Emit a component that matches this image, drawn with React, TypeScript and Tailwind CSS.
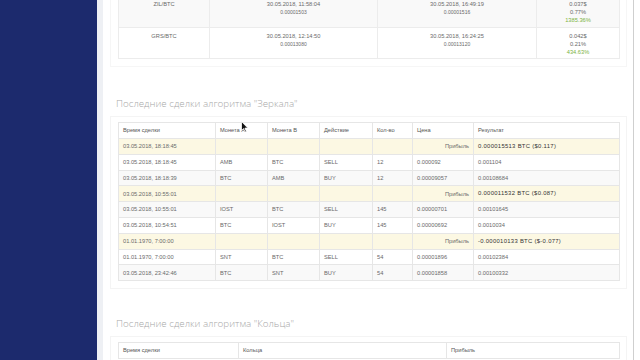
import React from "react";

type Row =
  | { kind: "profit"; time: string; value: string }
  | { kind: "trade"; time: string; a: string; b: string; act: string; qty: string; price: string; res: string };

const rows: Row[] = [
  { kind: "profit", time: "03.05.2018, 18:18:45", value: "0.000015513 BTC ($0.117)" },
  { kind: "trade", time: "03.05.2018, 18:18:45", a: "AMB", b: "BTC", act: "SELL", qty: "12", price: "0.000092", res: "0.001104" },
  { kind: "trade", time: "03.05.2018, 18:18:39", a: "BTC", b: "AMB", act: "BUY", qty: "12", price: "0.00009057", res: "0.00108684" },
  { kind: "profit", time: "03.05.2018, 10:55:01", value: "0.000011532 BTC ($0.087)" },
  { kind: "trade", time: "03.05.2018, 10:55:01", a: "IOST", b: "BTC", act: "SELL", qty: "145", price: "0.00000701", res: "0.00101645" },
  { kind: "trade", time: "03.05.2018, 10:54:51", a: "BTC", b: "IOST", act: "BUY", qty: "145", price: "0.00000692", res: "0.0010034" },
  { kind: "profit", time: "01.01.1970, 7:00:00", value: "-0.000010133 BTC ($-0.077)" },
  { kind: "trade", time: "01.01.1970, 7:00:00", a: "SNT", b: "BTC", act: "SELL", qty: "54", price: "0.00001896", res: "0.00102384" },
  { kind: "trade", time: "03.05.2018, 23:42:46", a: "BTC", b: "SNT", act: "BUY", qty: "54", price: "0.00001858", res: "0.00100332" },
];

const top = [
  { pair: "ZIL/BTC", d1: "30.05.2018, 11:58:04", p1: "0.00001503", d2: "30.05.2018, 16:49:19", p2: "0.00001516", usd: "0.037$", pct: "0.77%", g: "1385.36%" },
  { pair: "GRS/BTC", d1: "30.05.2018, 12:14:50", p1: "0.00013080", d2: "30.05.2018, 16:24:25", p2: "0.00013120", usd: "0.042$", pct: "0.21%", g: "434.63%" },
];

const td = "border border-[#e6e6e6] px-[4px] py-0 text-left font-normal";

export default function App() {
  return (
    <div className="relative flex h-[360px] w-[640px] overflow-hidden bg-white font-['Liberation_Sans',Arial,sans-serif] text-[5.7px] text-[#6a6a6a]">
      <div className="w-[97px] shrink-0 bg-[#1c2a6d]" />
      <div className="w-[6px] shrink-0 bg-[#eef0f4]" />
      <main className="flex w-[530px] shrink-0 flex-col pl-[7px] pr-[6px]">
        {/* Panel 1 (top, cut off) */}
        <div className="-mt-[5px] border-x border-b border-[#f6f6f6] px-[7px] pb-[7px]">
          <table className="w-[501px] table-fixed border-collapse">
            <colgroup>
              <col className="w-[91px]" />
              <col className="w-[168px]" />
              <col className="w-[159px]" />
              <col className="w-[83px]" />
            </colgroup>
            <tbody>
              {top.map((r, i) => (
                <tr key={r.pair} className={i === 0 ? "h-[32px] bg-[#f9f9f9]" : "h-[31px] bg-white"}>
                  <td className="border border-[#ececec] pt-[4px] text-center align-top leading-[8px]">{r.pair}</td>
                  <td className="border border-[#ececec] pt-[4px] text-center align-top leading-[8px]">
                    <div>{r.d1}</div>
                    <div className="text-[5px]">{r.p1}</div>
                  </td>
                  <td className="border border-[#ececec] pt-[4px] text-center align-top leading-[8px]">
                    <div>{r.d2}</div>
                    <div className="text-[5px]">{r.p2}</div>
                  </td>
                  <td className="border border-[#ececec] pt-[4px] text-center align-top leading-[8px]">
                    <div>{r.usd}</div>
                    <div>{r.pct}</div>
                    <div className="text-[#7cb342]">{r.g}</div>
                  </td>
                </tr>
              ))}
            </tbody>
          </table>
        </div>

        <h2 className="mt-[30px] pl-[6px] font-['Open_Sans',sans-serif] text-[9.8px] font-light leading-[14px] text-[#a8a8a8]">
          Последние сделки алгоритма "Зеркала"
        </h2>

        {/* Panel 2 */}
        <div className="mt-[5px] border border-[#f4f4f4] px-[7px] pb-[7px] pt-[5px]">
          <table className="w-[501px] table-fixed border-collapse">
            <colgroup>
              <col className="w-[97px]" />
              <col className="w-[52px]" />
              <col className="w-[52px]" />
              <col className="w-[53px]" />
              <col className="w-[40px]" />
              <col className="w-[61px]" />
              <col className="w-[146px]" />
            </colgroup>
            <thead>
              <tr className="h-[16px] text-[#555]">
                <th className={td}>Время сделки</th>
                <th className={td}>Монета А</th>
                <th className={td}>Монета В</th>
                <th className={td}>Действие</th>
                <th className={td}>Кол-во</th>
                <th className={td}>Цена</th>
                <th className={td}>Результат</th>
              </tr>
            </thead>
            <tbody>
              {rows.map((r, i) =>
                r.kind === "profit" ? (
                  <tr key={i} className="h-[15.8px] bg-[#fcf8e3]">
                    <td className={td}>{r.time}</td>
                    <td className={td}></td>
                    <td className={td}></td>
                    <td className={td}></td>
                    <td className={td}></td>
                    <td className={`${td} text-right`}>Прибыль</td>
                    <td className={`${td} text-[5.9px] font-bold tracking-[0.3px] text-[#333]`}>{r.value}</td>
                  </tr>
                ) : (
                  <tr key={i} className={`h-[15.8px] ${i % 2 === 0 ? "bg-[#f9f9f9]" : "bg-white"}`}>
                    <td className={td}>{r.time}</td>
                    <td className={td}>{r.a}</td>
                    <td className={td}>{r.b}</td>
                    <td className={td}>{r.act}</td>
                    <td className={td}>{r.qty}</td>
                    <td className={td}>{r.price}</td>
                    <td className={td}>{r.res}</td>
                  </tr>
                )
              )}
            </tbody>
          </table>
        </div>

        <h2 className="mt-[28px] pl-[6px] font-['Open_Sans',sans-serif] text-[9.8px] font-light leading-[14px] text-[#a8a8a8]">
          Последние сделки алгоритма "Кольца"
        </h2>

        {/* Panel 3 */}
        <div className="mt-[5px] border border-[#f4f4f4] px-[7px] pb-[7px] pt-[5px]">
          <table className="w-[501px] table-fixed border-collapse">
            <colgroup>
              <col className="w-[120px]" />
              <col className="w-[208px]" />
              <col className="w-[173px]" />
            </colgroup>
            <thead>
              <tr className="h-[16px] text-[#555]">
                <th className={td}>Время сделки</th>
                <th className={td}>Кольца</th>
                <th className={td}>Прибыль</th>
              </tr>
            </thead>
          </table>
        </div>
      </main>
      <div className="w-px shrink-0 bg-[#cfcfcf]" />
      <div className="flex-1 bg-white" />

      {/* mouse cursor */}
      <svg className="absolute left-[241px] top-[121px]" width="8" height="12" viewBox="0 0 8 12">
        <path d="M0.5 0.5 L0.5 9.5 L2.6 7.6 L4.1 11 L5.4 10.4 L3.9 7.1 L6.8 7.1 Z" fill="#111" stroke="#fff" strokeWidth="0.8" />
      </svg>
    </div>
  );
}
